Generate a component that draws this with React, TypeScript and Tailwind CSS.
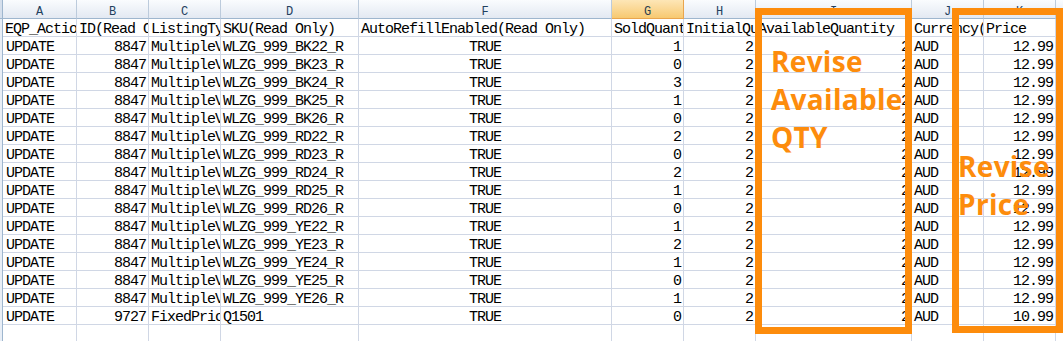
import React from "react";

const colW = [
  "w-[74px]",
  "w-[72px]",
  "w-[72px]",
  "w-[138px]",
  "w-[253px]",
  "w-[72px]",
  "w-[72px]",
  "w-[156px]",
  "w-[72px]",
  "w-[72px]",
];

const letters = ["A", "B", "C", "D", "F", "G", "H", "I", "J", "K"];

const dataAlign = [
  "text-left pl-[3px]",
  "text-right pr-[2px]",
  "text-left pl-[2px]",
  "text-left pl-[2px]",
  "text-center",
  "text-right pr-[2px]",
  "text-right pr-[2px]",
  "text-right pr-[2px]",
  "text-left pl-[2px]",
  "text-right pr-[2px]",
];

const headerRow = [
  "EQP_Action",
  "ID(Read Only)",
  "ListingType",
  "SKU(Read Only)",
  "AutoRefillEnabled(Read Only)",
  "SoldQuantity",
  "InitialQuantity",
  "AvailableQuantity",
  "Currency(Read Only)",
  "Price",
];

const skus: [string, string][] = [
  ["BK22", "1"],
  ["BK23", "0"],
  ["BK24", "3"],
  ["BK25", "1"],
  ["BK26", "0"],
  ["RD22", "2"],
  ["RD23", "0"],
  ["RD24", "2"],
  ["RD25", "1"],
  ["RD26", "0"],
  ["YE22", "1"],
  ["YE23", "2"],
  ["YE24", "1"],
  ["YE25", "0"],
  ["YE26", "1"],
];

const rows: string[][] = [
  ...skus.map(([s, sold]) => [
    "UPDATE",
    "8847",
    "MultipleVariations",
    `WLZG_999_${s}_R`,
    "TRUE",
    sold,
    "2",
    "2",
    "AUD",
    "12.99",
  ]),
  ["UPDATE", "9727", "FixedPriceItem", "Q1501", "TRUE", "0", "2", "2", "AUD", "10.99"],
];

function Cell({ w, cls, children }: { w: string; cls: string; children?: React.ReactNode }) {
  return (
    <div
      className={`${w} ${cls} shrink-0 h-[18px] border-r border-b border-[#d0d7e5] overflow-x-clip whitespace-nowrap leading-[21px]`}
    >
      {children}
    </div>
  );
}

function DataRow({ cells, header }: { cells?: string[]; header?: boolean }) {
  return (
    <div className="flex">
      <div className="w-[3px] shrink-0 h-[18px] bg-[#e8eef6] border-r border-[#9eb6ce]" />
      {colW.map((w, i) => (
        <Cell key={i} w={w} cls={header ? "text-left pl-[2px]" : dataAlign[i]}>
          {cells ? cells[i] : ""}
        </Cell>
      ))}
      <div className="w-[7px] shrink-0 h-[18px] border-b border-[#d0d7e5]" />
    </div>
  );
}

export default function App() {
  return (
    <div className="relative w-[1063px] h-[341px] overflow-hidden bg-white text-black font-['Liberation_Mono',monospace] text-[15px] tracking-[-1px]">
      {/* column header */}
      <div className="flex h-[19px]">
        <div className="w-[3px] shrink-0 h-full bg-[#d5dfec] border-r border-b border-[#9eb6ce]" />
        {letters.map((l, i) => (
          <div
            key={l}
            className={`${colW[i]} shrink-0 h-full border-r border-b flex items-end justify-center text-[12px] leading-none tracking-normal ${
              i === 5
                ? "bg-linear-to-b from-[#fde6b6] to-[#f7c970] border-r-[#e9a54e] border-b-[#e9a54e] text-[#2c3e50]"
                : "bg-linear-to-b from-[#fafcfe] to-[#e3e9f2] border-r-[#bccbdc] border-b-[#9eb6ce] text-[#22405e]"
            }`}
          >
            {l}
          </div>
        ))}
        <div className="w-[7px] shrink-0 h-full bg-linear-to-b from-[#fafcfe] to-[#e3e9f2] border-b border-[#9eb6ce]" />
      </div>

      <DataRow cells={headerRow} header />
      {rows.map((r, i) => (
        <DataRow key={i} cells={r} />
      ))}
      <DataRow />

      {/* orange annotation boxes */}
      <div className="absolute left-[755px] top-[8px] w-[157px] h-[326px] border-[7px] border-[#fd8c0c]" />
      <div className="absolute left-[952px] top-[8px] w-[111px] h-[325px] border-[7px] border-[#fd8c0c]" />

      <div className="absolute left-[771px] top-[42px] font-['Open_Sans',sans-serif] font-bold text-[28px] leading-[38px] tracking-[0.3px] text-[#fd8c0c] whitespace-nowrap">
        Revise
        <br />
        Available
        <br />
        QTY
      </div>
      <div className="absolute left-[958px] top-[147px] font-['Open_Sans',sans-serif] font-bold text-[28px] leading-[38px] tracking-[0.3px] text-[#fd8c0c] whitespace-nowrap">
        Revise
        <br />
        Price
      </div>
    </div>
  );
}
